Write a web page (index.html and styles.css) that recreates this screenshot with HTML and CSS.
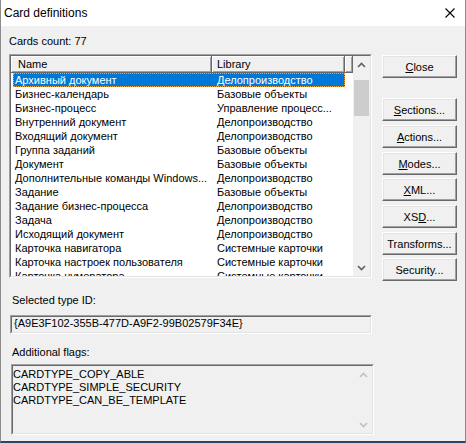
FILE: index.html
```html
<!DOCTYPE html>
<html>
<head>
<meta charset="utf-8">
<title>Card definitions</title>
<link rel="stylesheet" href="styles.css">
</head>
<body>
<div class="window">
  <div class="titlebar">
    <span class="title">Card definitions</span>
    <svg class="close-x" width="10" height="10" viewBox="0 0 10 10"><path d="M0.5 0.5 L9.5 9.5 M9.5 0.5 L0.5 9.5" stroke="#000" stroke-width="1.1" fill="none"/></svg>
  </div>
  <div class="content">
    <div class="label">Cards count: 77</div>
    <div class="main">
      <div class="sunken list-box">
        <div class="sunken-inner list">
          <div class="list-body">
            <div class="header">
              <div class="hcell c-name">Name</div>
              <div class="hcell c-lib">Library</div>
              <div class="hcell c-fill"></div>
            </div>
            <div class="rows">
              <div class="row selected"><span class="r-name">Архивный документ</span><span class="r-lib">Делопроизводство</span></div>
              <div class="row"><span class="r-name">Бизнес-календарь</span><span class="r-lib">Базовые объекты</span></div>
              <div class="row"><span class="r-name">Бизнес-процесс</span><span class="r-lib">Управление процесс...</span></div>
              <div class="row"><span class="r-name">Внутренний документ</span><span class="r-lib">Делопроизводство</span></div>
              <div class="row"><span class="r-name">Входящий документ</span><span class="r-lib">Делопроизводство</span></div>
              <div class="row"><span class="r-name">Группа заданий</span><span class="r-lib">Базовые объекты</span></div>
              <div class="row"><span class="r-name">Документ</span><span class="r-lib">Базовые объекты</span></div>
              <div class="row"><span class="r-name">Дополнительные команды Windows...</span><span class="r-lib">Делопроизводство</span></div>
              <div class="row"><span class="r-name">Задание</span><span class="r-lib">Базовые объекты</span></div>
              <div class="row"><span class="r-name">Задание бизнес-процесса</span><span class="r-lib">Делопроизводство</span></div>
              <div class="row"><span class="r-name">Задача</span><span class="r-lib">Делопроизводство</span></div>
              <div class="row"><span class="r-name">Исходящий документ</span><span class="r-lib">Делопроизводство</span></div>
              <div class="row"><span class="r-name">Карточка навигатора</span><span class="r-lib">Системные карточки</span></div>
              <div class="row"><span class="r-name">Карточка настроек пользователя</span><span class="r-lib">Системные карточки</span></div>
              <div class="row"><span class="r-name">Карточка нумератора</span><span class="r-lib">Системные карточки</span></div>
            </div>
          </div>
          <div class="vscroll">
            <div class="sb-btn"><svg width="9" height="6" viewBox="0 0 9 6"><polyline points="1,5 4.5,1.5 8,5" fill="none" stroke="#606060" stroke-width="1.6"/></svg></div>
            <div class="sb-track"><div class="sb-thumb"></div></div>
            <div class="sb-btn"><svg width="9" height="6" viewBox="0 0 9 6"><polyline points="1,1 4.5,4.5 8,1" fill="none" stroke="#606060" stroke-width="1.6"/></svg></div>
          </div>
        </div>
      </div>
      <div class="buttons">
        <button class="btn"><u>C</u>lose</button>
        <button class="btn g20"><u>S</u>ections...</button>
        <button class="btn g4"><u>A</u>ctions...</button>
        <button class="btn g4"><u>M</u>odes...</button>
        <button class="btn g3"><u>X</u>ML...</button>
        <button class="btn g4">XS<u>D</u>...</button>
        <button class="btn g4">Transforms...</button>
        <button class="btn g3">Security...</button>
      </div>
    </div>
    <div class="label sub-label id-label">Selected type ID:</div>
    <div class="sunken id-box">
      <div class="sunken-inner id-inner">{A9E3F102-355B-477D-A9F2-99B02579F34E}</div>
    </div>
    <div class="label sub-label flags-label">Additional flags:</div>
    <div class="sunken flags-box">
      <div class="sunken-inner flags-inner">
        <div class="flags-text">CARDTYPE_COPY_ABLE<br>CARDTYPE_SIMPLE_SECURITY<br>CARDTYPE_CAN_BE_TEMPLATE</div>
        <div class="vscroll disabled">
          <div class="sb-btn"><svg width="9" height="6" viewBox="0 0 9 6"><polyline points="1,5 4.5,1.5 8,5" fill="none" stroke="#c0c0c0" stroke-width="1.6"/></svg></div>
          <div class="sb-track"></div>
          <div class="sb-btn"><svg width="9" height="6" viewBox="0 0 9 6"><polyline points="1,1 4.5,4.5 8,1" fill="none" stroke="#c0c0c0" stroke-width="1.6"/></svg></div>
        </div>
      </div>
    </div>
  </div>
</div>
</body>
</html>
```

FILE: styles.css
```css
html, body {
  margin: 0;
  padding: 0;
  background: #f0f0f0;
}

.window {
  box-sizing: border-box;
  width: 466px;
  height: 443px;
  border: 1px solid #8c8c8c;
  border-top: 0;
  border-bottom: 2px solid #2b4566;
  background: #f0f0f0;
  font-family: "Liberation Sans", Arial, sans-serif;
  font-size: 11px;
  color: #000;
  display: flex;
  flex-direction: column;
  overflow: hidden;
}

.titlebar {
  flex: none;
  height: 26px;
  background: #fff;
  display: flex;
  align-items: center;
  padding-left: 3px;
  padding-right: 10px;
}

.title {
  font-size: 12px;
}

.close-x {
  margin-left: auto;
  display: block;
}

.content {
  padding: 9px 0 0 8px;
  display: flex;
  flex-direction: column;
  align-items: flex-start;
}

.label {
  height: 13px;
  line-height: 13px;
  white-space: nowrap;
}

.sub-label {
  margin-left: 3px;
}

.main {
  display: flex;
  margin-top: 6px;
}

.sunken {
  box-sizing: border-box;
  border: 1px solid;
  border-color: #a0a0a0 #fff #fff #a0a0a0;
}

.sunken-inner {
  box-sizing: border-box;
  height: 100%;
  border: 1px solid;
  border-color: #696969 #e3e3e3 #e3e3e3 #696969;
}

.list-box {
  width: 363px;
  height: 224px;
}

.list {
  display: flex;
  background: #fff;
}

.list-body {
  width: 342px;
  overflow: hidden;
}

.header {
  display: flex;
  height: 17px;
}

.hcell {
  box-sizing: border-box;
  height: 17px;
  padding-top: 1px;
  line-height: 15px;
  background: #f0f0f0;
  border-right: 1px solid #696969;
  border-bottom: 1px solid #696969;
  box-shadow: inset 1px 1px #fff, inset -1px -1px #a0a0a0;
  white-space: nowrap;
}

.c-name {
  width: 201px;
  padding-left: 7px;
}

.c-lib {
  width: 133px;
  padding-left: 5px;
}

.c-fill {
  flex: 1;
}

.rows {
  padding-left: 2px;
}

.row {
  box-sizing: border-box;
  display: flex;
  width: 332px;
  height: 14px;
  padding-top: 1px;
  line-height: 13px;
  white-space: nowrap;
}

.r-name {
  box-sizing: border-box;
  width: 199px;
  padding-left: 2px;
  overflow: hidden;
}

.r-lib {
  box-sizing: border-box;
  flex: 1;
  padding-left: 5px;
  overflow: hidden;
}

.row.selected {
  background: #0078d7;
  color: #fff;
  outline: 1px dotted #f7a040;
  outline-offset: -1px;
}

.vscroll {
  flex: none;
  width: 17px;
  display: flex;
  flex-direction: column;
  background: #f0f0f0;
}

.sb-btn {
  flex: none;
  height: 17px;
  display: flex;
  align-items: center;
  justify-content: center;
}

.sb-btn svg {
  display: block;
}

.sb-track {
  flex: 1;
  padding-top: 7px;
}

.sb-thumb {
  height: 36px;
  margin: 0 1px;
  background: #cdcdcd;
}

.buttons {
  display: flex;
  flex-direction: column;
  margin-left: 10px;
  margin-top: 1px;
}

.btn {
  box-sizing: border-box;
  width: 75px;
  height: 23px;
  padding: 0;
  margin: 0;
  border: 1px solid;
  border-color: #fff #696969 #696969 #fff;
  box-shadow: inset -1px -1px #a0a0a0, inset 1px 1px #e3e3e3;
  background: #f0f0f0;
  font-family: inherit;
  font-size: 11px;
  color: #000;
  display: flex;
  align-items: center;
  justify-content: center;
}

.g20 { margin-top: 20px; }
.g4 { margin-top: 4px; }
.g3 { margin-top: 3px; }

.id-label {
  margin-top: 13px;
}

.id-box {
  margin-top: 8px;
  margin-left: 1px;
  width: 362px;
  height: 19px;
}

.id-inner {
  padding-left: 2px;
  line-height: 13px;
  background: #f0f0f0;
  white-space: nowrap;
}

.flags-label {
  margin-top: 12px;
}

.flags-box {
  margin-top: 5px;
  margin-left: 2px;
  width: 363px;
  height: 71px;
}

.flags-inner {
  display: flex;
  background: #f0f0f0;
}

.flags-text {
  flex: 1;
  padding-top: 2px;
  line-height: 13px;
  white-space: nowrap;
}
```
